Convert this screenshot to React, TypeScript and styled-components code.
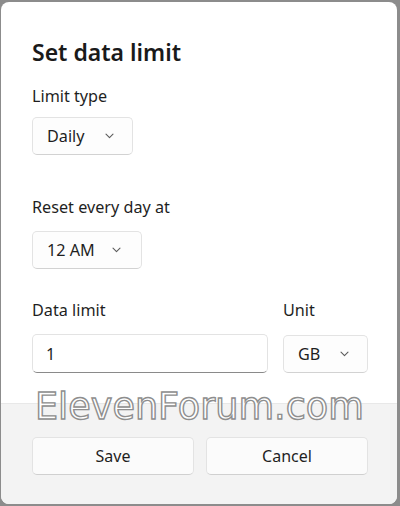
import styled, { createGlobalStyle } from 'styled-components';

const GlobalStyle = createGlobalStyle`
  html, body {
    margin: 0;
    padding: 0;
    background: #8c8c8c;
  }
  #root {
    width: 400px;
    height: 506px;
    padding: 2px 3px 2px 1px;
    box-sizing: border-box;
  }
`;

const Chevron = () => (
  <svg width='9' height='6' viewBox='0 0 9 6' fill='none'>
    <path d='M1 1.2l3.5 3.5 3.5-3.5' stroke='#5c5c5c' strokeWidth='1.1' strokeLinecap='round' strokeLinejoin='round' />
  </svg>
);

const App = () => {
  return (
    <>
      <GlobalStyle />
      <Dialog>
        <Body>
          <Title>Set data limit</Title>
          <Field $top={18}>
            <Label>Limit type</Label>
            <Select $width={101} $gap={20}>
              Daily
              <Chevron />
            </Select>
          </Field>
          <Field $top={42}>
            <Label>Reset every day at</Label>
            <Select $width={110} $gap={17} $labelGap={14}>
              12 AM
              <Chevron />
            </Select>
          </Field>
          <Row>
            <Field $top={0} $grow>
              <Label>Data limit</Label>
              <Input defaultValue='1' />
            </Field>
            <Field $top={0}>
              <Label>Unit</Label>
              <Select $width={85} $gap={20} $labelGap={15}>
                GB
                <Chevron />
              </Select>
            </Field>
          </Row>
        </Body>
        <Footer>
          <Button type='button'>Save</Button>
          <Button type='button'>Cancel</Button>
        </Footer>
        <Watermark>ElevenForum.com</Watermark>
      </Dialog>
    </>
  );
};

export default App;

const Dialog = styled.div`
  position: relative;
  height: 100%;
  background: #ffffff;
  border-radius: 8px;
  overflow: hidden;
  display: flex;
  flex-direction: column;
  font-family: 'Noto Sans', 'Open Sans', sans-serif;
  color: #1b1b1b;
`;

const Body = styled.div`
  flex: 1;
  padding: 35px 29px 0 31px;
  display: flex;
  flex-direction: column;
`;

const Title = styled.h1`
  margin: 0;
  font-size: 23px;
  line-height: 31px;
  font-weight: 600;
  color: #1a1a1a;
`;

const Field = styled.div<{ $top: number; $grow?: boolean }>`
  display: flex;
  flex-direction: column;
  min-width: 0;
  margin-top: ${({ $top }) => $top}px;
  flex: ${({ $grow }) => ($grow ? 1 : '0 0 auto')};
`;

const Row = styled.div`
  display: flex;
  gap: 15px;
  margin-top: 31px;
`;

const Label = styled.div`
  font-size: 16.2px;
  line-height: 20px;
  color: #1f1f1f;
`;

const Select = styled.div<{ $width: number; $gap: number; $labelGap?: number }>`
  margin-top: ${({ $labelGap }) => $labelGap ?? 11}px;
  width: ${({ $width }) => $width}px;
  height: 38px;
  box-sizing: border-box;
  padding-left: 14px;
  display: flex;
  align-items: center;
  gap: ${({ $gap }) => $gap}px;
  font-size: 16.2px;
  color: #1f1f1f;
  background: #fdfdfd;
  border: 1px solid #e3e3e3;
  border-bottom-color: #d2d2d2;
  border-radius: 5px;
`;

const Input = styled.input`
  margin-top: 14px;
  width: 100%;
  height: 39px;
  box-sizing: border-box;
  padding: 0 13px;
  font-family: inherit;
  font-size: 16.2px;
  color: #1f1f1f;
  background: #ffffff;
  border: 1px solid #e3e3e3;
  border-bottom: 1px solid #8a8a8a;
  border-radius: 5px;
  outline: none;
`;

const Footer = styled.div`
  height: 101px;
  box-sizing: border-box;
  padding: 33px 29px 0 31px;
  background: #f3f3f3;
  border-top: 1px solid #e8e8e8;
  display: grid;
  grid-template-columns: 1fr 1fr;
  column-gap: 12px;
  align-items: start;
`;

const Button = styled.button`
  height: 38px;
  font-family: inherit;
  font-size: 16px;
  color: #1f1f1f;
  background: #fbfbfb;
  border: 1px solid #e3e3e3;
  border-bottom-color: #d0d0d0;
  border-radius: 5px;
`;

const Watermark = styled.div`
  position: absolute;
  left: 34px;
  top: 383px;
  font-family: 'DejaVu Sans', sans-serif;
  font-size: 36.6px;
  letter-spacing: 0;
  color: #ffffff;
  -webkit-text-stroke: 1.4px #8e8e8e;
  pointer-events: none;
`;
